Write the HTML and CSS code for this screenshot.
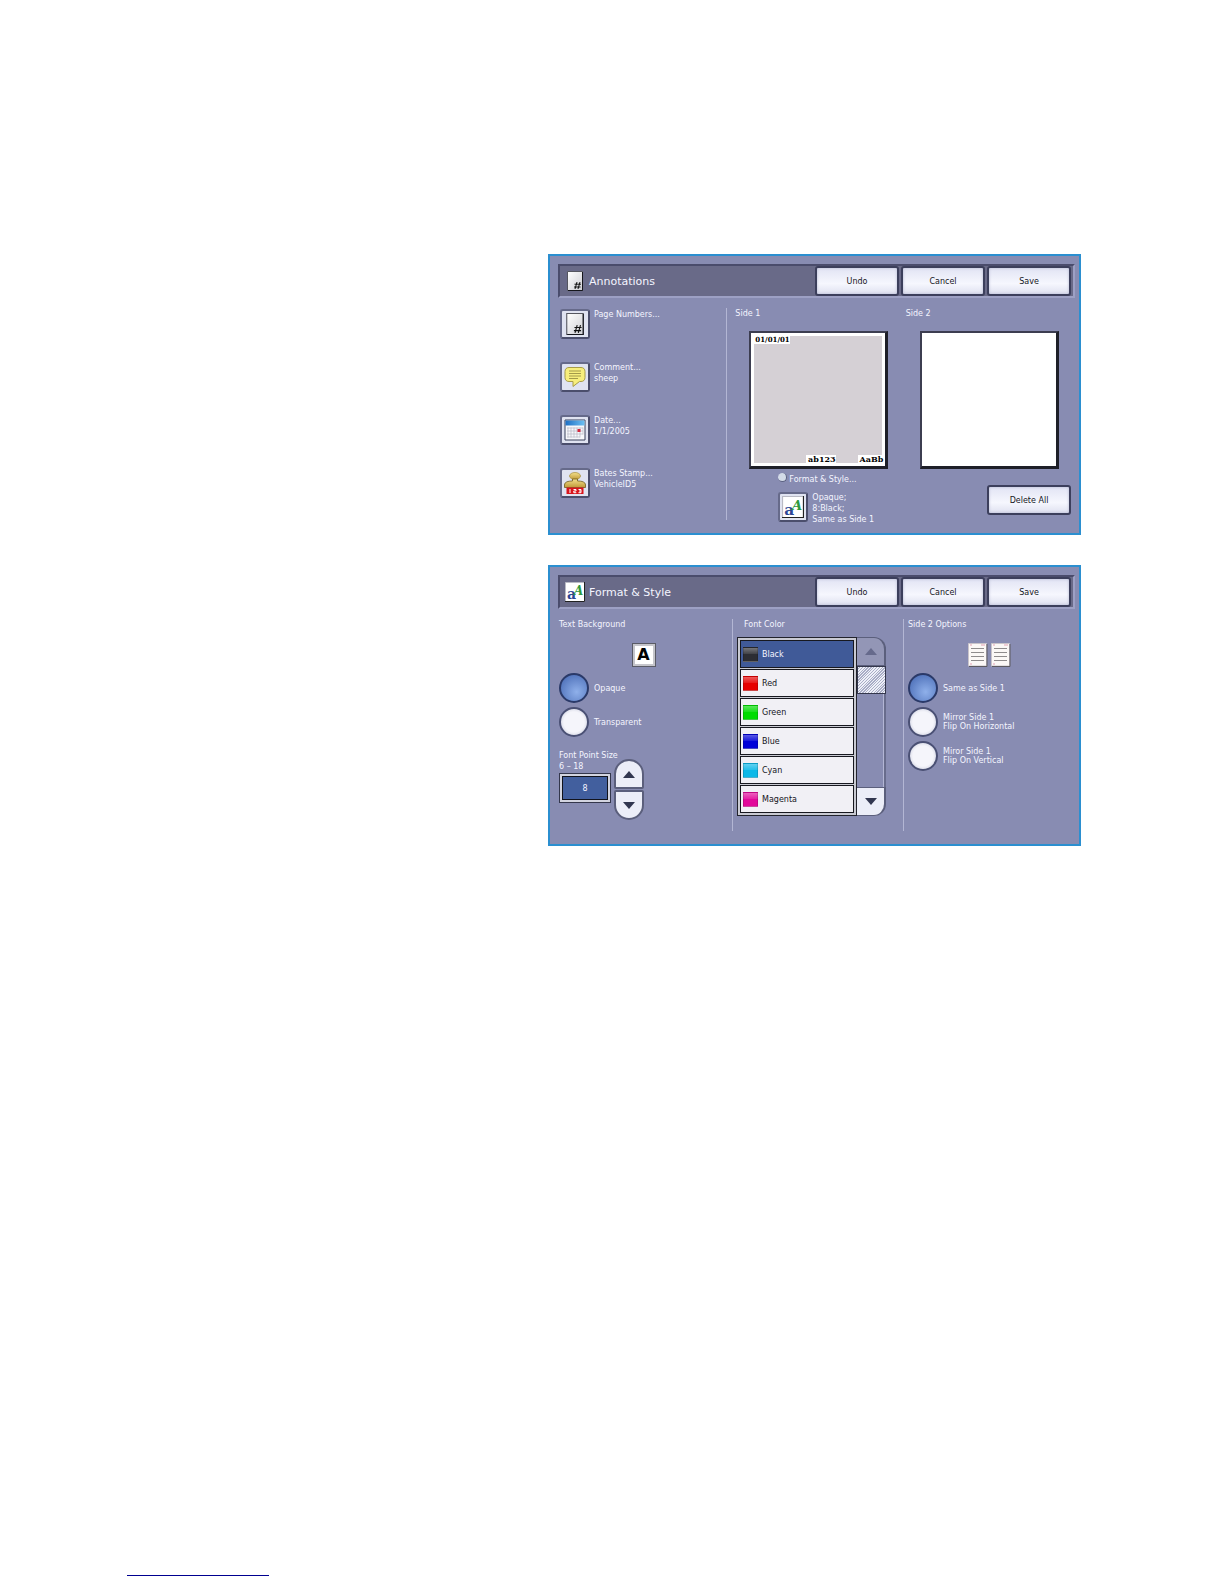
FILE: index.html
```html
<!doctype html>
<html lang="en">
<head>
  <meta charset="utf-8">
  <title>Annotations | Format &amp; Style</title>
  <meta name="viewport" content="width=device-width, initial-scale=1">
  <link rel="stylesheet" href="styles.css">
</head>
<body>
  <!-- shared icons -->
  <svg class="icon-defs" aria-hidden="true">
    <defs>
      <linearGradient id="paper" x1="0" y1="0" x2="1" y2="1">
        <stop offset="0" stop-color="#fff"/>
        <stop offset="1" stop-color="#cfcfd4"/>
      </linearGradient>
      <linearGradient id="gold" x1="0" y1="0" x2="0" y2="1">
        <stop offset="0" stop-color="#f3e08c"/>
        <stop offset="1" stop-color="#c09a38"/>
      </linearGradient>
      <linearGradient id="sky" x1="0" y1="0" x2="1" y2="0">
        <stop offset="0" stop-color="#1d6fc4"/>
        <stop offset="1" stop-color="#6cc0f2"/>
      </linearGradient>
    </defs>
    <symbol id="icon-page" viewBox="0 0 20 20">
      <path d="M2.500 .5h15v19h-15z" fill="url(#paper)" stroke="#55565f"/>
      <path d="M17.500 1v18.500H3" fill="none" stroke="#15161c"/>
      <path d="M12 11l-2 7M15 11l-2 7M9.500 13.200h6.500M9 16h6.500" fill="none" stroke="#111"/>
    </symbol>
    <symbol id="icon-comment" viewBox="0 0 22 22">
      <path d="M5 1.500h12c2.500 0 4 1.500 4 4v6c0 2.500-1.500 4-4 4h-1.500L9 20.500v-5H5c-2.500 0-4-1.500-4-4v-6c0-2.500 1.500-4 4-4z" fill="#f7ee7c" stroke="#a89c48"/>
      <path d="M5 5h12M5 7.500h12M5 10h12M5 12.500h9" stroke="#a39a4a" fill="none"/>
    </symbol>
    <symbol id="icon-date" viewBox="0 0 22 22">
      <path d="M1 1h20v20H1z" fill="#f7f8fb" stroke="#39415a"/>
      <path d="M1.500 1.500h19v5h-19z" fill="url(#sky)"/>
      <path d="M3 9h16M3 12h16M3 15h16M3 18h13M4 8.500v10M7 8.500v10M10 8.500v10M13 8.500v10M16 8.500v10M19 8.500v7" stroke="#b4b8c4" stroke-width=".7"/>
      <path d="M13.500 10h3v3h-3z" fill="#d3263c"/>
    </symbol>
    <symbol id="icon-stamp" viewBox="0 0 22 22">
      <ellipse cx="11" cy="4" rx="5.500" ry="3.500" fill="url(#gold)" stroke="#a58c3c" stroke-width=".7"/>
      <path d="M8.500 7h5v2c4.500 0 8 1 8 4v2.500H.5V13c0-3 3.500-4 8-4z" fill="url(#gold)" stroke="#6f5a1c" stroke-width=".8"/>
      <path d="M2.500 15.500h17V22h-17z" fill="#d8141c"/>
      <path d="M6 17v4M9.500 17.500h2.500v1.500H9.800v1.700h2.500M14.500 17.500h2.500v3.200h-2.500M15 19h2" stroke="#fff" stroke-width="1" fill="none"/>
    </symbol>
    <symbol id="icon-sheet" viewBox="0 0 20 24">
      <path d="M.5 .5h18v22.500H.5z" fill="#fbf8f6" stroke="#c9c4ca"/>
      <path d="M19 1v22.500H1" fill="none" stroke="#5c5a60"/>
      <path d="M3 5.500h13M3 9.500h13M3 13.500h13M3 17.500h13" stroke="#8f8c8c" stroke-width="1.200"/>
      <path d="M2 2h2M13 2h4M2 21h2" stroke="#e2a3b4"/>
    </symbol>
    <symbol id="icon-up" viewBox="0 0 12 7"><path d="M6 0l6 7H0z" fill="currentColor"/></symbol>
    <symbol id="icon-down" viewBox="0 0 12 7"><path d="M0 0h12L6 7z" fill="currentColor"/></symbol>
  </svg>

  <main class="screens">
    <section class="panel">
      <header class="toolbar">
        <svg class="toolbar-icon"><use href="#icon-page"/></svg>
        <h1 class="toolbar-title">Annotations</h1>
        <button type="button" class="btn">Undo</button>
        <button type="button" class="btn">Cancel</button>
        <button type="button" class="btn">Save</button>
      </header>
      <div class="columns annotations">
        <div class="menu">
          <div class="menu-item">
            <button type="button" class="icon-btn" aria-label="Page Numbers"><svg class="icon"><use href="#icon-page"/></svg></button>
            <p>Page Numbers...</p>
          </div>
          <div class="menu-item">
            <button type="button" class="icon-btn" aria-label="Comment"><svg class="icon"><use href="#icon-comment"/></svg></button>
            <p>Comment...<br>sheep</p>
          </div>
          <div class="menu-item">
            <button type="button" class="icon-btn" aria-label="Date"><svg class="icon"><use href="#icon-date"/></svg></button>
            <p>Date...<br>1/1/2005</p>
          </div>
          <div class="menu-item">
            <button type="button" class="icon-btn" aria-label="Bates Stamp"><svg class="icon"><use href="#icon-stamp"/></svg></button>
            <p>Bates Stamp...<br>VehicleID5</p>
          </div>
        </div>
        <div class="side divided">
          <h2 class="label">Side 1</h2>
          <div class="preview filled">
            <span class="mark mark-date">01/01/01</span>
            <div class="preview-foot">
              <span class="mark">ab123</span>
              <span class="mark">AaBb</span>
            </div>
          </div>
          <div class="format">
            <p class="format-title"><span class="dot"></span>Format &amp; Style...</p>
            <div class="menu-item">
              <button type="button" class="icon-btn" aria-label="Format and Style">
                <svg class="icon" viewBox="0 0 20 20">
                  <path d="M.5 .5h19v19H.5z" fill="#fff" stroke="#b9bac4"/>
                  <path d="M19.500 0v19.500H0" fill="none" stroke="#222"/>
                  <text x="2" y="17" class="glyph glyph-blue">a</text>
                  <text x="9" y="13" class="glyph glyph-green">A</text>
                </svg>
              </button>
              <p>Opaque;<br>8:Black;<br>Same as Side 1</p>
            </div>
          </div>
        </div>
        <div class="side">
          <h2 class="label">Side 2</h2>
          <div class="preview"></div>
          <button type="button" class="btn delete-btn">Delete All</button>
        </div>
      </div>
    </section>

    <section class="panel">
      <header class="toolbar">
        <svg class="toolbar-icon" viewBox="0 0 20 20">
          <path d="M.5 .5h19v19H.5z" fill="#fff" stroke="#b9bac4"/>
          <path d="M19.500 0v19.500H0" fill="none" stroke="#222"/>
          <text x="2" y="17" class="glyph glyph-blue">a</text>
          <text x="9" y="13" class="glyph glyph-green">A</text>
        </svg>
        <h1 class="toolbar-title">Format &amp; Style</h1>
        <button type="button" class="btn">Undo</button>
        <button type="button" class="btn">Cancel</button>
        <button type="button" class="btn">Save</button>
      </header>
      <div class="columns styles">
        <div class="group">
          <h2 class="label">Text Background</h2>
          <div class="sample"><span class="letter">A</span></div>
          <div class="radios">
            <label class="radio"><input type="radio" name="background" checked>Opaque</label>
            <label class="radio"><input type="radio" name="background">Transparent</label>
          </div>
          <div class="size">
            <div class="size-field">
              <label for="pointSize">Font Point Size<br>6 – 18</label>
              <input type="text" id="pointSize" value="8">
            </div>
            <div class="stepper">
              <button type="button" class="step step-up" aria-label="Increase"><svg class="arrow"><use href="#icon-up"/></svg></button>
              <button type="button" class="step step-down" aria-label="Decrease"><svg class="arrow"><use href="#icon-down"/></svg></button>
            </div>
          </div>
        </div>
        <div class="group divided">
          <h2 class="label color-label">Font Color</h2>
          <div class="picker">
            <ul class="colors">
              <li><button type="button" class="color selected"><span class="swatch black"></span>Black</button></li>
              <li><button type="button" class="color"><span class="swatch red"></span>Red</button></li>
              <li><button type="button" class="color"><span class="swatch green"></span>Green</button></li>
              <li><button type="button" class="color"><span class="swatch blue"></span>Blue</button></li>
              <li><button type="button" class="color"><span class="swatch cyan"></span>Cyan</button></li>
              <li><button type="button" class="color"><span class="swatch magenta"></span>Magenta</button></li>
            </ul>
            <div class="scrollbar">
              <button type="button" class="scroll-up" aria-label="Scroll up" disabled><svg class="arrow"><use href="#icon-up"/></svg></button>
              <div class="thumb"></div>
              <div class="track"></div>
              <button type="button" class="scroll-down" aria-label="Scroll down"><svg class="arrow"><use href="#icon-down"/></svg></button>
            </div>
          </div>
        </div>
        <div class="group divided">
          <h2 class="label">Side 2 Options</h2>
          <div class="sample">
            <svg class="sheet"><use href="#icon-sheet"/></svg>
            <svg class="sheet"><use href="#icon-sheet"/></svg>
          </div>
          <div class="radios">
            <label class="radio"><input type="radio" name="side2" checked>Same as Side 1</label>
            <label class="radio"><input type="radio" name="side2">Mirror Side 1<br>Flip On Horizontal</label>
            <label class="radio"><input type="radio" name="side2">Miror Side 1<br>Flip On Vertical</label>
          </div>
        </div>
      </div>
    </section>
  </main>
  <footer class="footer"><hr class="footer-line"></footer>
</body>
</html>
```

FILE: styles.css
```css
* {
  box-sizing: border-box;
}
body {
  margin: 0;
  min-height: 100vh;
  display: flex;
  flex-direction: column;
  background: #fff;
  color: #f4f5ff;
  font-family: 'DejaVu Sans', sans-serif;
  font-size: 8px;
  line-height: 11px;
}
h1, h2, p, ul {
  margin: 0;
  padding: 0;
  font-weight: 400;
}
button, input {
  font: inherit;
  margin: 0;
}
svg {
  display: block;
  flex: none;
}
.icon-defs {
  position: absolute;
  width: 0;
  height: 0;
}
.glyph {
  font-family: 'DejaVu Serif', serif;
  font-weight: 700;
}
.glyph-blue {
  font-size: 14px;
  fill: #2c4694;
}
.glyph-green {
  font-size: 12px;
  font-style: italic;
  fill: #2e9a3c;
}
.screens {
  flex: 1;
  display: flex;
  flex-direction: column;
  gap: 30px;
  padding: 254px 143px 30px 548px;
}
.panel {
  min-height: 281px;
  padding: 8px 4px 8px 8px;
  border: 2px solid #2b8fd0;
  background: #888cb2;
}

/* toolbar */
.toolbar {
  display: flex;
  align-items: center;
  gap: 2px;
  height: 34px;
  padding: 0 2px 0 5px;
  background: #696a88;
  border: 2px solid #4a4c6c;
  border-right-color: #9da0c4;
  border-bottom-color: #9da0c4;
}
.toolbar-icon {
  width: 20px;
  height: 20px;
}
.toolbar-title {
  flex: 1;
  padding: 2px 0 0 2px;
  font-size: 11px;
  line-height: 14px;
}
.btn {
  width: 84px;
  height: 30px;
  padding: 0;
  border: 2px solid #3c3f5c;
  border-radius: 3px;
  background: linear-gradient(#e2e4f4, #f6f7fe 60%, #dfe1f0);
  box-shadow: inset 0 0 3px #b4b7d2;
  color: #14151c;
}

/* annotations */
.columns {
  display: grid;
}
.annotations {
  grid-template-columns: 169fr 172fr 178fr;
  padding-top: 10px;
}
.menu {
  display: flex;
  flex-direction: column;
  gap: 23px;
  padding: 1px 0 0 2px;
}
.menu-item {
  display: flex;
  gap: 4px;
}
.icon-btn {
  display: flex;
  align-items: center;
  justify-content: center;
  flex: none;
  width: 30px;
  height: 30px;
  padding: 0;
  border: 2px solid #4b4e6c;
  border-top-color: #666a8a;
  border-left-color: #666a8a;
  border-radius: 3px;
  background: #e0e3f1;
}
.icon {
  width: 22px;
  height: 22px;
}
.divided {
  border-left: 1px solid #b3b6d4;
}
.side {
  display: flex;
  flex-direction: column;
  height: 212px;
  padding-left: 8px;
}
.label {
  font-size: 8px;
  line-height: 11px;
}
.preview {
  display: flex;
  flex: none;
  flex-direction: column;
  justify-content: space-between;
  align-items: flex-start;
  width: 139px;
  height: 138px;
  margin: 12px 0 0 14px;
  background: #fff;
  border: 2px solid #3c3d50;
  border-right: 3px solid #1e1f28;
  border-bottom: 3px solid #1e1f28;
}
.filled {
  padding: 2px;
  background: #d5d0d5 padding-box;
  box-shadow: inset 0 0 0 3px #fff;
}
.preview-foot {
  display: flex;
  justify-content: flex-end;
  gap: 22px;
  width: 100%;
}
.mark {
  background: #fff;
  color: #000;
  font-family: 'DejaVu Serif', serif;
  font-weight: 700;
  font-size: 8px;
  line-height: 9px;
  padding-left: 2px;
}
.mark-date {
  font-size: 7px;
}
.format {
  margin: 4px 0 0 43px;
}
.format-title {
  display: flex;
  margin-bottom: 5px;
  gap: 2px;
  line-height: 14px;
}
.dot {
  width: 9px;
  height: 9px;
  border-radius: 50%;
  background: #d3dbe8;
  border-right: 1px solid #596080;
  border-bottom: 1px solid #596080;
}
.delete-btn {
  align-self: flex-end;
  margin: 16px 4px 0 0;
}

/* format & style */
.styles {
  grid-template-columns: 174fr 171fr 172fr;
  padding-top: 10px;
}
.group {
  height: 212px;
  padding-left: 4px;
}
.group:first-child {
  padding-left: 1px;
}
.sample {
  display: flex;
  justify-content: center;
  gap: 3px;
  height: 24px;
  margin: 13px 4px 6px 0;
}
.letter {
  width: 24px;
  border: 3px solid #c5c5cb;
  outline: 1px solid #5a5b66;
  outline-offset: -1px;
  background: #fff;
  color: #000;
  font-size: 16px;
  font-weight: 700;
  line-height: 18px;
  text-align: center;
}
.sheet {
  width: 20px;
  height: 24px;
}
.radios {
  display: flex;
  flex-direction: column;
  gap: 4px;
}
.radio {
  display: grid;
  grid-template-columns: 30px 1fr;
  grid-template-rows: 30px;
  column-gap: 5px;
  align-items: center;
  line-height: 9px;
}
.radio input {
  appearance: none;
  width: 30px;
  height: 30px;
  border: 2px solid #4a5074;
  border-radius: 50%;
  background: radial-gradient(#f5f5fb 55%, #b9bdd2);
}
.radio input:checked {
  background: radial-gradient(circle at 60% 65%, #8fb0ea, #5577be 75%);
  border-color: #2a3968;
}
.size {
  display: flex;
  gap: 3px;
  margin-top: 13px;
}
.size-field {
  width: 52px;
  white-space: nowrap;
}
.size-field label {
  display: block;
  margin-bottom: 1px;
}
.size-field input {
  display: block;
  width: 52px;
  height: 30px;
  padding: 0;
  border: 1px solid #34374c;
  background: #425f9e;
  box-shadow: inset 0 0 0 2px #d2d4e0, inset 0 0 0 3px #11131c;
  color: #f4f5ff;
  text-align: center;
}
.stepper {
  display: flex;
  flex-direction: column;
  gap: 1px;
  padding-top: 9px;
}
.step, .scroll-up, .scroll-down {
  display: flex;
  align-items: center;
  justify-content: center;
  width: 30px;
  height: 30px;
  padding: 0;
  border: 2px solid #5b5f7c;
  background: #eceef8;
  color: #323750;
}
.step-up {
  border-radius: 15px 15px 2px 2px;
}
.step-down {
  border-radius: 2px 2px 15px 15px;
}
.arrow {
  width: 12px;
  height: 7px;
}
.color-label {
  padding-left: 7px;
}
.picker {
  display: flex;
  margin-top: 7px;
}
.colors {
  display: flex;
  flex-direction: column;
  gap: 1px;
  width: 120px;
  padding: 2px;
  list-style: none;
  background: #c9cad2;
  border: 1px solid #22232c;
}
.color {
  display: flex;
  align-items: center;
  gap: 4px;
  width: 100%;
  height: 28px;
  padding: 0 2px;
  border: 1px solid #17181f;
  background: #f1f0f5;
  color: #14151c;
}
.selected {
  background: #405a98;
  color: #f4f5ff;
}
.swatch {
  width: 15px;
  height: 15px;
  border: 1px solid rgba(0,0,0,0.15);
  background-image: linear-gradient(rgba(255,255,255,0.35), rgba(255,255,255,0.1) 45%, transparent 50%);
}
.black { background-color: #2c2d33; }
.red { background-color: #e60000; }
.green { background-color: #00dc00; }
.blue { background-color: #0000d8; }
.cyan { background-color: #0cb8e8; }
.magenta { background-color: #e2089a; }
.scrollbar {
  display: flex;
  flex-direction: column;
  width: 29px;
}
.scroll-up, .scroll-down {
  width: 29px;
  height: 29px;
  border-width: 1px 2px 1px 0;
}
.scroll-up {
  border-radius: 0 12px 0 0;
  background: #9396b6;
  color: #666a8c;
}
.scroll-down {
  border-radius: 0 0 12px 0;
}
.thumb {
  height: 28px;
  border: 1px solid #34374c;
  background: repeating-linear-gradient(135deg, #eef0f8 0 1px, #a9adc6 1px 2px);
}
.track {
  flex: 1;
  border-right: 2px solid #686c8c;
  box-shadow: inset -1px 0 #b3b6d4;
}

.footer {
  padding: 0 127px 8px;
}
.footer-line {
  width: 142px;
  margin: 0;
  border: 0;
  border-top: 1px solid #000090;
}
```
